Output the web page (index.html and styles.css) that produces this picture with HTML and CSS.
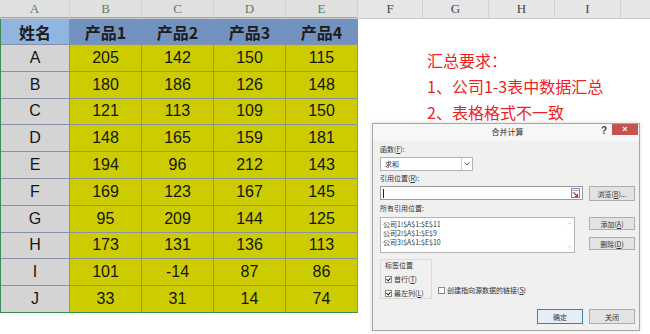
FILE: index.html
```html
<!DOCTYPE html>
<html lang="zh-CN">
<head>
    <meta charset="utf-8">
    <meta name="viewport" content="width=device-width,initial-scale=1.0">
    <link rel="stylesheet" href="styles.css">
</head>
<body>
    <div class="colheads">
        <span class="sel w-a">A</span>
        <span class="sel w-b">B</span>
        <span class="sel w-b">C</span>
        <span class="sel w-b">D</span>
        <span class="sel w-b">E</span>
        <span class="w-f">F</span>
        <span class="w-g">G</span>
        <span class="w-g">H</span>
        <span class="w-g">I</span>
        <span class="rest"></span>
    </div>

    <div class="sheet">
        <div class="table">
            <div class="th name">姓名</div><div class="th">产品1</div><div class="th">产品2</div><div class="th">产品3</div><div class="th">产品4</div>
            <div class="nm">A</div><div>205</div><div>142</div><div>150</div><div>115</div>
            <div class="nm">B</div><div>180</div><div>186</div><div>126</div><div>148</div>
            <div class="nm">C</div><div>121</div><div>113</div><div>109</div><div>150</div>
            <div class="nm">D</div><div>148</div><div>165</div><div>159</div><div>181</div>
            <div class="nm">E</div><div>194</div><div>96</div><div>212</div><div>143</div>
            <div class="nm">F</div><div>169</div><div>123</div><div>167</div><div>145</div>
            <div class="nm">G</div><div>95</div><div>209</div><div>144</div><div>125</div>
            <div class="nm">H</div><div>173</div><div>131</div><div>136</div><div>113</div>
            <div class="nm">I</div><div>101</div><div>-14</div><div>87</div><div>86</div>
            <div class="nm">J</div><div>33</div><div>31</div><div>14</div><div>74</div>
        </div>

        <div class="notes">
            <p>汇总要求：</p>
            <p>1、公司1-3表中数据汇总</p>
            <p>2、表格格式不一致</p>
        </div>
    </div>

    <!-- consolidate dialog floating over the sheet -->
    <div class="dialog">
        <div class="titlebar">
            <span class="title">合并计算</span>
            <span class="help">?</span>
            <span class="close">×</span>
        </div>
        <div class="content">
            <div class="label">函数(<u>F</u>):</div>
            <div class="select"><span>求和</span><i class="drop"><svg width="6" height="4" viewBox="0 0 6 4"><path d="M0.5 0.5 L3 3 L5.5 0.5" fill="none" stroke="#555" stroke-width="0.9"/></svg></i></div>

            <div class="label">引用位置(<u>R</u>):</div>
            <div class="row">
                <div class="input">
                    <i class="caret"></i>
                    <svg class="pick" width="9" height="10" viewBox="0 0 9 10">
                        <rect x="0.5" y="0.5" width="8" height="9" fill="#fff" stroke="#7a8aa6"/>
                        <path d="M1.5 2.5 H7.5 M1.5 4.5 H4" stroke="#6f86b5" stroke-width="0.8"/>
                        <path d="M3 5 L6.5 8.5 M6.5 5.8 V8.5 H3.8" fill="none" stroke="#d42a2a" stroke-width="1.2"/>
                    </svg>
                </div>
                <span class="btn"><span>浏览(<u>B</u>)...</span></span>
            </div>

            <div class="label">所有引用位置:</div>
            <div class="row list-row">
                <div class="list">
                    <div class="items">
                        <div>公司1!$A$1:$E$11</div>
                        <div>公司2!$A$1:$E$9</div>
                        <div>公司3!$A$1:$E$10</div>
                    </div>
                    <div class="scroll">
                        <svg width="5" height="3" viewBox="0 0 5 3"><path d="M0.5 2.5 L2.5 0.5 L4.5 2.5" fill="none" stroke="#c4c4c4" stroke-width="0.8"/></svg>
                        <svg width="5" height="3" viewBox="0 0 5 3"><path d="M0.5 0.5 L2.5 2.5 L4.5 0.5" fill="none" stroke="#c4c4c4" stroke-width="0.8"/></svg>
                    </div>
                </div>
                <div class="side">
                    <span class="btn"><span>添加(<u>A</u>)</span></span>
                    <span class="btn"><span>删除(<u>D</u>)</span></span>
                </div>
            </div>

            <div class="row options">
                <div class="group">
                    <div class="group-title">标签位置</div>
                    <div class="check"><i class="box on"></i><span>首行(<u>T</u>)</span></div>
                    <div class="check"><i class="box on"></i><span>最左列(<u>L</u>)</span></div>
                </div>
                <div class="check link"><i class="box"></i><span>创建指向源数据的链接(<u>S</u>)</span></div>
            </div>

            <div class="actions">
                <span class="btn default">确定</span>
                <span class="btn">关闭</span>
            </div>
        </div>
    </div>
</body>
</html>
```

FILE: styles.css
```css
body {margin: 0; width: 650px; height: 334px; overflow: hidden; position: relative; background: #fff; font-family: "Liberation Sans", "Noto Sans CJK SC", sans-serif;}

/* column letters */
.colheads {display: flex; height: 18px; background: #e6e6e6; border-bottom: 1px solid #c9c9c9;}
.colheads span {box-sizing: border-box; border-right: 1px solid #d2d2d2; text-align: center; font: 13px/18px "Liberation Serif", serif; color: #444;}
.colheads .sel {background: #e0e0e0; color: #5a7d66; box-shadow: inset 0 -1px 0 #8fb39b;}
.w-a {width: 70px;}
.w-b {width: 72px;}
.w-f {width: 65px;}
.w-g {width: 66px;}
.colheads .rest {flex: 1; border-right: none;}

.sheet {display: flex;}

.table {display: grid; grid-template-columns: 69px repeat(4, 72px); grid-template-rows: 26px repeat(10, 26.8px); border-left: 1px solid #3c8a57;}
.table div {box-sizing: border-box; display: flex; align-items: center; justify-content: center; border-right: 1px solid #8891a3; border-bottom: 1px solid #8891a3; background: #cccc00; color: #151515; font-size: 16px;}
.table div:nth-last-child(-n+5) {border-bottom-color: #3c8a57;}
.table .th {background: #7492bf; font-family: "Noto Sans CJK SC", sans-serif; font-weight: bold; font-size: 16px; color: #1c1c1c;}
.table .th.name {background: #92b5e0;}
.table .nm {background: #d4d4d4;}

.notes {padding: 28px 0 0 69px; color: #ee2224; font-family: "Noto Sans CJK SC", sans-serif; font-size: 16px; line-height: 26px;}
.notes p {margin: 0;}

/* dialog */
.dialog {position: absolute; left: 372px; top: 123px; width: 268px; height: 208px; box-sizing: border-box; background: #f0f0f0; border: 1px solid #a7a7a7; box-shadow: 0 0 4px rgba(0,0,0,0.15); font-family: "Noto Sans CJK SC", sans-serif; font-size: 7px; color: #333;}
.dialog u {text-decoration: underline; text-underline-offset: 1px;}
.titlebar {display: flex; align-items: flex-start; height: 17px; background: #f7f7f7;}
.title {flex: 1; padding-left: 42px; text-align: center; font-size: 8px; line-height: 15px; color: #333;}
.help {width: 8px; margin-right: 4px; font: bold 10px/14px "Liberation Sans", sans-serif; color: #444; text-align: center;}
.close {width: 26px; height: 11px; margin-right: 1px; background: #c75050; color: #fff; font: bold 9px/11px "Liberation Sans", sans-serif; text-align: center;}

.content {padding: 3px 4px 0 7px;}
.label {height: 11px; line-height: 11px;}
.select {display: flex; width: 93px; height: 14px; box-sizing: border-box; margin: 2px 0 2px; background: #fff; border: 1px solid #b4b4b4;}
.select span {flex: 1; padding-left: 4px; line-height: 12px;}
.select .drop {display: flex; align-items: center; justify-content: center; width: 10px; border-left: 1px solid #d0d0d0;}

.row {display: flex; justify-content: space-between; margin-top: 2px;}
.input {display: flex; align-items: center; justify-content: space-between; width: 203px; height: 14px; box-sizing: border-box; background: #fff; border: 1px solid #9a9a9a; padding: 0 2px;}
.caret {width: 1px; height: 9px; background: #222;}
.btn {display: flex; align-items: center; justify-content: center; width: 46px; height: 15px; box-sizing: border-box; background: #e3e3e3; border: 1px solid #adadad; color: #333;}
.row + .label {margin-top: 2px;}

.list-row {margin-top: 3px;}
.list {display: flex; width: 195px; height: 36px; box-sizing: border-box; background: #fff; border: 1px solid #b4b4b4;}
.items {flex: 1; padding: 2px 0 0 2px; line-height: 9px;}
.scroll {display: flex; flex-direction: column; justify-content: space-between; width: 9px; padding: 4px 0 4px; align-items: center;}
.side {display: flex; flex-direction: column; gap: 7px;}
.side .btn {height: 13px;}

.options {justify-content: flex-start; align-items: flex-end; margin-top: 6px;}
.group {width: 52px; height: 40px; box-sizing: border-box; border: 1px solid #dadada; padding: 1px 0 0 4px;}
.group-title {line-height: 9px; margin-bottom: 2px;}
.check {display: flex; align-items: center; gap: 2px; height: 14px;}
.check.link {margin-left: 6px; height: 18px;}
.box {display: inline-block; width: 7px; height: 7px; box-sizing: border-box; background: #fff; border: 1px solid #8a8a8a; position: relative;}
.box.on::after {content: ""; position: absolute; left: 1px; top: 0; width: 2px; height: 3px; border: solid #222; border-width: 0 1px 1px 0; transform: rotate(40deg);}

.actions {display: flex; justify-content: flex-end; gap: 6px; margin-top: 10px;}
.btn.default {border-color: #3c7fb1; background: #e5eef7;}
```
